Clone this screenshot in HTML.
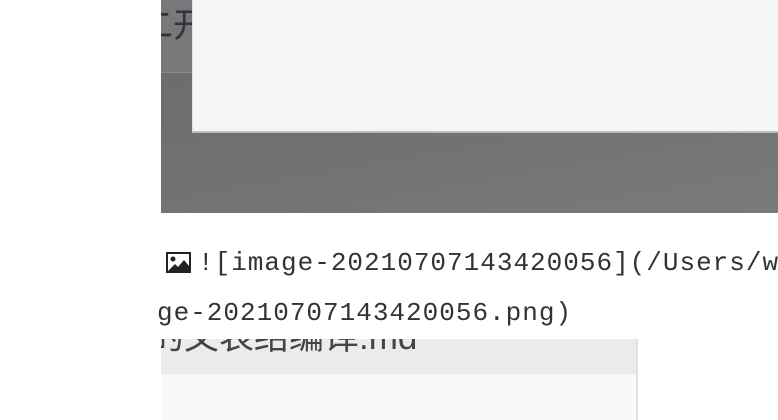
<!DOCTYPE html>
<html><head><meta charset="utf-8"><style>
html,body{margin:0;padding:0;width:778px;height:420px;overflow:hidden;background:#fff;position:relative}
.img1{position:absolute;left:161px;top:0;width:617px;height:213px;background:linear-gradient(170deg,#6a6a6a 0%,#707070 50%,#7a7a7a 100%)}
.tl{position:absolute;left:161px;top:0;width:31px;height:72px;background:#787878;border-bottom:1px solid #8a8a8a;overflow:hidden}
.tl span{position:absolute;left:-22px;top:6px;font:34px "Noto Sans CJK SC",sans-serif;color:#2e3440;white-space:nowrap;line-height:1}
.panel{position:absolute;left:192px;top:0;width:586px;height:131px;background:#f4f6f6;border-bottom:2px solid #bdbdbd;border-left:1px solid #ddd}
.t{position:absolute;font:26px "Liberation Mono",monospace;letter-spacing:1px;color:#333;white-space:nowrap}
.img2{position:absolute;left:161px;top:339px;width:477px;height:81px;background:#f9f9f9;border-right:2px solid #e0e0e0;box-sizing:border-box}
.img2 .h{height:35px;background:#ebebeb;overflow:hidden;position:relative}
.img2 .h span{position:absolute;left:-12px;top:-30px;font:35px "Liberation Sans","Noto Sans CJK SC",sans-serif;color:#444;white-space:nowrap}
</style></head><body>
<div class="img1"></div>
<div class="tl"><span>二开</span></div>
<div class="panel"></div>
<svg style="position:absolute;left:165px;top:251px" width="27" height="23" viewBox="0 0 27 23"><rect x="1" y="1" width="25" height="21" fill="#222"/><rect x="3" y="3" width="21" height="17" fill="#fff"/><circle cx="8" cy="8" r="2.5" fill="#222"/><path d="M3 20 L10 13 L13 16 L19 9 L24 15 L24 20 Z" fill="#222"/></svg>
<div class="t" style="left:198px;top:248px">![image-20210707143420056](/Users/w</div>
<div class="t" style="left:157px;top:298px">ge-20210707143420056.png)</div>
<div class="img2"><div class="h"><span>的文表结编译.md</span></div></div>
</body></html>
